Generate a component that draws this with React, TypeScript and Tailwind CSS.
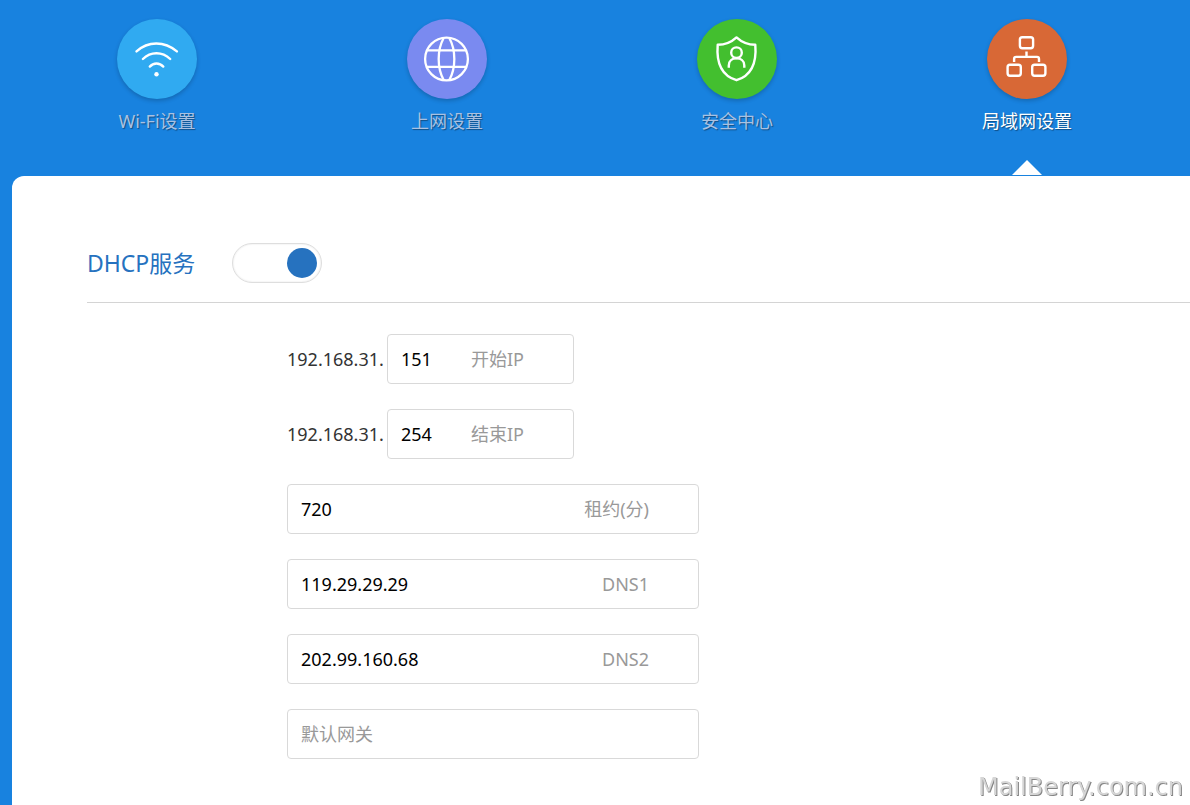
import React, { useState } from "react";
import clsx from "clsx";

const WifiIcon = () => (
  <svg viewBox="0.8 0 80 80" className="size-20" fill="none" stroke="#fff" strokeWidth="2.4" strokeLinecap="round">
    <path d="M20.3 32.4C31.8 21.8 48.2 21.8 60.7 32.4" />
    <path d="M26.7 40C34.5 32.3 46 32.3 54 40" />
    <path d="M33.6 47.6C37.2 43.4 43.3 43.4 47.1 47.6" />
    <circle cx="40.3" cy="55.2" r="2.2" fill="#fff" stroke="none" />
  </svg>
);

const GlobeIcon = () => (
  <svg viewBox="0.8 0 80 80" className="size-20" fill="none" stroke="#fff" strokeWidth="2.3">
    <circle cx="40.3" cy="40" r="21.4" />
    <path d="M37.5 19C30.8 31 30.8 49 37.5 61M43.1 19C49.8 31 49.8 49 43.1 61" />
    <path d="M20.7 31.3H60M20.7 47.8H60" />
  </svg>
);

const ShieldIcon = () => (
  <svg viewBox="0.8 0 80 80" className="size-20" fill="none" stroke="#fff" strokeWidth="2.4" strokeLinejoin="round">
    <path d="M40.3 18.4C36.5 22 29.5 25.8 21.5 25.8C20.2 41.5 23.5 56 40.3 61.2C57.2 56 60.4 41.5 59.1 25.8C51.1 25.8 44.2 22 40.3 18.4Z" />
    <circle cx="40.3" cy="33.7" r="5.3" />
    <path d="M32.6 48.8V46.4C32.6 41.8 36.2 39.3 40.3 39.3S48.1 41.8 48.1 46.4V48.8" />
  </svg>
);

const NetworkIcon = () => (
  <svg viewBox="0.8 0 80 80" className="size-20" fill="none" stroke="#fff" strokeWidth="2.4">
    <rect x="33.7" y="18.2" width="13.2" height="11" rx="2.4" />
    <rect x="21.4" y="45.7" width="13.2" height="11" rx="2.4" />
    <rect x="46" y="45.7" width="13.2" height="11" rx="2.4" />
    <path d="M40.3 32.6V38M27.9 43V39.9Q27.9 37.9 29.9 37.9H50.8Q52.8 37.9 52.8 39.9V43" />
  </svg>
);

const tabs = [
  { name: "Wi-Fi设置", color: "bg-[#30aaf1]", icon: <WifiIcon /> },
  { name: "上网设置", color: "bg-[#7a8af0]", icon: <GlobeIcon /> },
  { name: "安全中心", color: "bg-[#43bf2f]", icon: <ShieldIcon /> },
  { name: "局域网设置", color: "bg-[#d86836]", icon: <NetworkIcon /> },
];

interface FieldProps {
  id: string;
  label: string;
  value?: string;
  prefix?: string;
}

const Field = ({ id, label, value = "", prefix }: FieldProps) => {
  const [text, setText] = useState(value);

  return (
    <div className="flex items-center">
      {prefix && <span className="w-[100px] text-[#333]">{prefix}</span>}
      <div
        className={clsx(
          "flex h-[50px] items-center rounded border border-[#d9d9d9] pl-[13px]",
          prefix ? "w-[187px]" : "w-[412px]",
          text && "pr-[49px]"
        )}
      >
        <input
          id={id}
          type="text"
          value={text}
          placeholder={text ? undefined : label}
          aria-label={label}
          onChange={(e) => setText(e.target.value)}
          className="min-w-0 flex-1 bg-transparent text-black outline-none placeholder:text-[#999]"
        />
        {text && (
          <label htmlFor={id} className="shrink-0 text-[#999]">
            {label}
          </label>
        )}
      </div>
    </div>
  );
};

const App = () => {
  const [active, setActive] = useState(3);
  const [dhcp, setDhcp] = useState(true);

  return (
    <div className="flex min-h-screen flex-col bg-[#1882df] pl-3 font-['Noto_Sans','Noto_Sans_CJK_SC',sans-serif] text-lg leading-6">
      <nav className="grid grid-cols-4 pr-[18px]">
        {tabs.map((tab, i) => (
          <button
            key={tab.name}
            type="button"
            onClick={() => setActive(i)}
            className="flex h-44 flex-col items-center pt-[19px]"
          >
            <span className={clsx("size-20 rounded-full shadow-[0_2px_4px_rgba(0,0,0,0.2)]", tab.color)}>
              {tab.icon}
            </span>
            <span
              className={clsx(
                "mt-[10px] [text-shadow:1px_1px_1px_rgba(0,0,0,0.4)]",
                i === active ? "text-white" : "text-[#a9c1e2]"
              )}
            >
              {tab.name}
            </span>
            {i === active && (
              <svg viewBox="0 0 30 15" className="mt-auto mb-px h-[15px] w-[30px]" fill="#fff">
                <path d="M15 0L30 15H0Z" />
              </svg>
            )}
          </button>
        ))}
      </nav>

      <main className="flex-1 rounded-tl-xl bg-white pt-[67px] pb-11 pl-[75px]">
        <div className="flex items-center border-b border-[#d4d4d4] pb-[19px]">
          <h2 className="w-[145px] text-[23px] text-[#2672bf]">
            <label htmlFor="dhcp">DHCP服务</label>
          </h2>
          <input
            id="dhcp"
            type="checkbox"
            role="switch"
            checked={dhcp}
            onChange={(e) => setDhcp(e.target.checked)}
            className="h-10 w-[90px] appearance-none rounded-full border border-[#dedede] px-1 py-1 shadow-[inset_0_0_2px_rgba(0,0,0,0.12)] before:block before:size-[30px] before:rounded-full before:bg-[#b5b5b5] checked:before:ml-auto checked:before:bg-[#2672bf]"
          />
        </div>

        <form className="mt-[31px] flex flex-col gap-[25px] pl-[200px]">
          <Field id="start" label="开始IP" value="151" prefix="192.168.31." />
          <Field id="end" label="结束IP" value="254" prefix="192.168.31." />
          <Field id="lease" label="租约(分)" value="720" />
          <Field id="dns1" label="DNS1" value="119.29.29.29" />
          <Field id="dns2" label="DNS2" value="202.99.160.68" />
          <Field id="gateway" label="默认网关" />
        </form>
      </main>

      <div className="pointer-events-none fixed right-[7px] bottom-1.5 font-['DejaVu_Sans',sans-serif] text-2xl leading-6 text-[#d6d6d6] [text-shadow:1px_1px_0_#858585]">
        MailBerry.com.cn
      </div>
    </div>
  );
};

export default App;
